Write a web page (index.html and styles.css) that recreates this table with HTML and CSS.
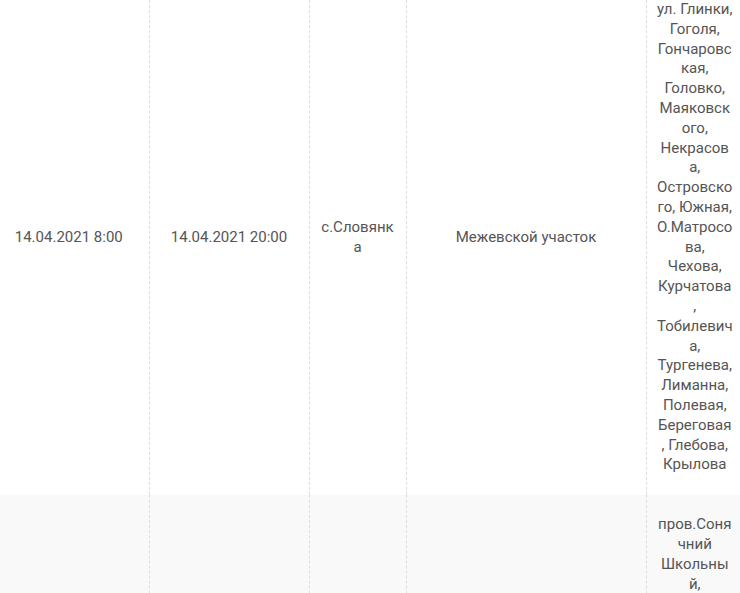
FILE: index.html
```html
<!DOCTYPE html>
<html lang="ru">
<head>
  <meta charset="UTF-8">
  <meta name="viewport" content="width=device-width, initial-scale=1.0"/>
  <title>График отключений</title>
  <link rel="stylesheet" href="styles.css">
</head>
<body>
  <div class="scroll">
    <table class="schedule">
      <colgroup>
        <col class="c-start">
        <col class="c-end">
        <col class="c-place">
        <col class="c-area">
        <col class="c-streets">
      </colgroup>
      <tbody>
        <tr>
          <td>14.04.2021 8:00</td>
          <td>14.04.2021 20:00</td>
          <td>с.Словянка</td>
          <td>Межевской участок</td>
          <td class="streets">ул. Глинки,<br>Гоголя,<br>Гончаровс<br>кая,<br>Головко,<br>Маяковск<br>ого,<br>Некрасов<br>а,<br>Островско<br>го, Южная,<br>О.Матросо<br>ва,<br>Чехова,<br>Курчатова<br>,<br>Тобилевич<br>а,<br>Тургенева,<br>Лиманна,<br>Полевая,<br>Береговая<br>, Глебова,<br>Крылова</td>
        </tr>
        <tr>
          <td></td>
          <td></td>
          <td></td>
          <td></td>
          <td class="streets">пров.Соня<br>чний<br>Школьны<br>й,<br>Садовый</td>
        </tr>
      </tbody>
    </table>
  </div>
</body>
</html>
```

FILE: styles.css
```css
body {
    margin: 0;
    background: #ffffff;
    font-family: Roboto, "Noto Sans", sans-serif;
    font-size: 15px;
    line-height: 1.32;
    color: #555555;
}

.scroll {
    width: 740px;
    height: 593px;
    overflow: hidden;
}

.schedule {
    border-collapse: collapse;
    table-layout: fixed;
    width: 754px;
    margin-left: -11px;
    margin-top: -20px;
}

.c-start { width: 160px; }
.c-end { width: 160px; }
.c-place { width: 97px; }
.c-area { width: 240px; }
.c-streets { width: 97px; }

.schedule td {
    padding: 20px 10px;
    text-align: center;
    vertical-align: middle;
    overflow-wrap: break-word;
    border-right: 1px dashed #dddddd;
}

.schedule td:last-child {
    border-right: none;
}

.schedule td.streets {
    white-space: nowrap;
}

.schedule tr:nth-child(even) td {
    background: #f9f9f9;
}
```
